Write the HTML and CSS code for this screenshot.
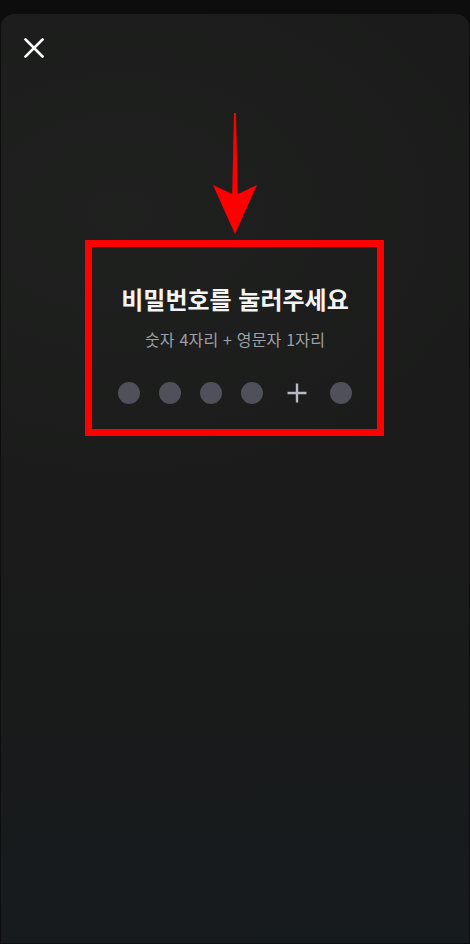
FILE: index.html
```html
<!DOCTYPE html>
<html lang="ko">
<head>
<meta charset="utf-8">
<link rel="stylesheet" href="styles.css">
</head>
<body>
<div class="sheet">
  <div class="header">
    <svg class="close" width="20" height="20" viewBox="0 0 20 20">
      <path d="M1.5 1.5 L18.5 18.5 M18.5 1.5 L1.5 18.5" stroke="#ffffff" stroke-width="2.6" stroke-linecap="square" fill="none"/>
    </svg>
  </div>
  <div class="content">
    <h1 class="title">비밀번호를 눌러주세요</h1>
    <p class="subtitle">숫자 4자리 + 영문자 1자리</p>
    <div class="dots">
      <span class="dot"></span>
      <span class="dot"></span>
      <span class="dot"></span>
      <span class="dot"></span>
      <span class="plus">
        <svg width="20" height="20" viewBox="0 0 20 20">
          <path d="M0.5 10 H19.5 M10 0.5 V19.5" stroke="#b6bbc1" stroke-width="2.4" fill="none"/>
        </svg>
      </span>
      <span class="dot"></span>
    </div>
  </div>
</div>
<svg class="arrow" width="470" height="240" viewBox="0 0 470 240">
  <path d="M234 113 L236 113 L237.8 194 L257 185 L235 234 L213 185 L232.2 194 Z" fill="#ff0000"/>
</svg>
<div class="highlight"></div>
</body>
</html>
```
FILE: styles.css
```css
html, body {
  margin: 0;
  padding: 0;
}
body {
  background: #0c0d0c;
  width: 470px;
  height: 944px;
  overflow: hidden;
  position: relative;
  font-family: "Noto Sans CJK KR", "Noto Sans", sans-serif;
}
.sheet {
  margin: 14px 1px 0 1px;
  height: 929px;
  border-radius: 13px 13px 0 0;
  background:
    radial-gradient(ellipse 420px 300px at 120px 200px, rgba(34,36,34,0.6), rgba(26,27,26,0) 100%),
    linear-gradient(180deg, #1a1b1a 0%, #1a1b1a 60%, #181a1b 82%, #161b1e 100%);
  box-sizing: border-box;
  padding: 24px 0 0 23px;
}
.header {
  height: 20px;
  display: flex;
}
.close {
  display: block;
}
.content {
  margin-top: 225px;
  margin-left: -23px;
  display: flex;
  flex-direction: column;
  align-items: center;
}
.title {
  margin: 0;
  font-size: 24px;
  line-height: 32px;
  font-weight: 700;
  color: #f4f4f4;
}
.subtitle {
  margin: 12px 0 0 0;
  font-size: 16px;
  line-height: 24px;
  font-weight: 400;
  letter-spacing: 0.2px;
  color: #9ea1a7;
}
.dots {
  margin-top: 31px;
  display: flex;
  align-items: center;
  gap: 19px;
}
.dot {
  width: 22px;
  height: 22px;
  border-radius: 50%;
  background: #4f5059;
}
.plus {
  width: 29px;
  height: 22px;
  display: flex;
  align-items: center;
  justify-content: center;
}
.plus svg {
  display: block;
}
.arrow {
  position: absolute;
  left: 0;
  top: 0;
}
.highlight {
  position: absolute;
  left: 85px;
  top: 240px;
  width: 299px;
  height: 196px;
  box-sizing: border-box;
  border: 7.5px solid #ff0000;
}
```
